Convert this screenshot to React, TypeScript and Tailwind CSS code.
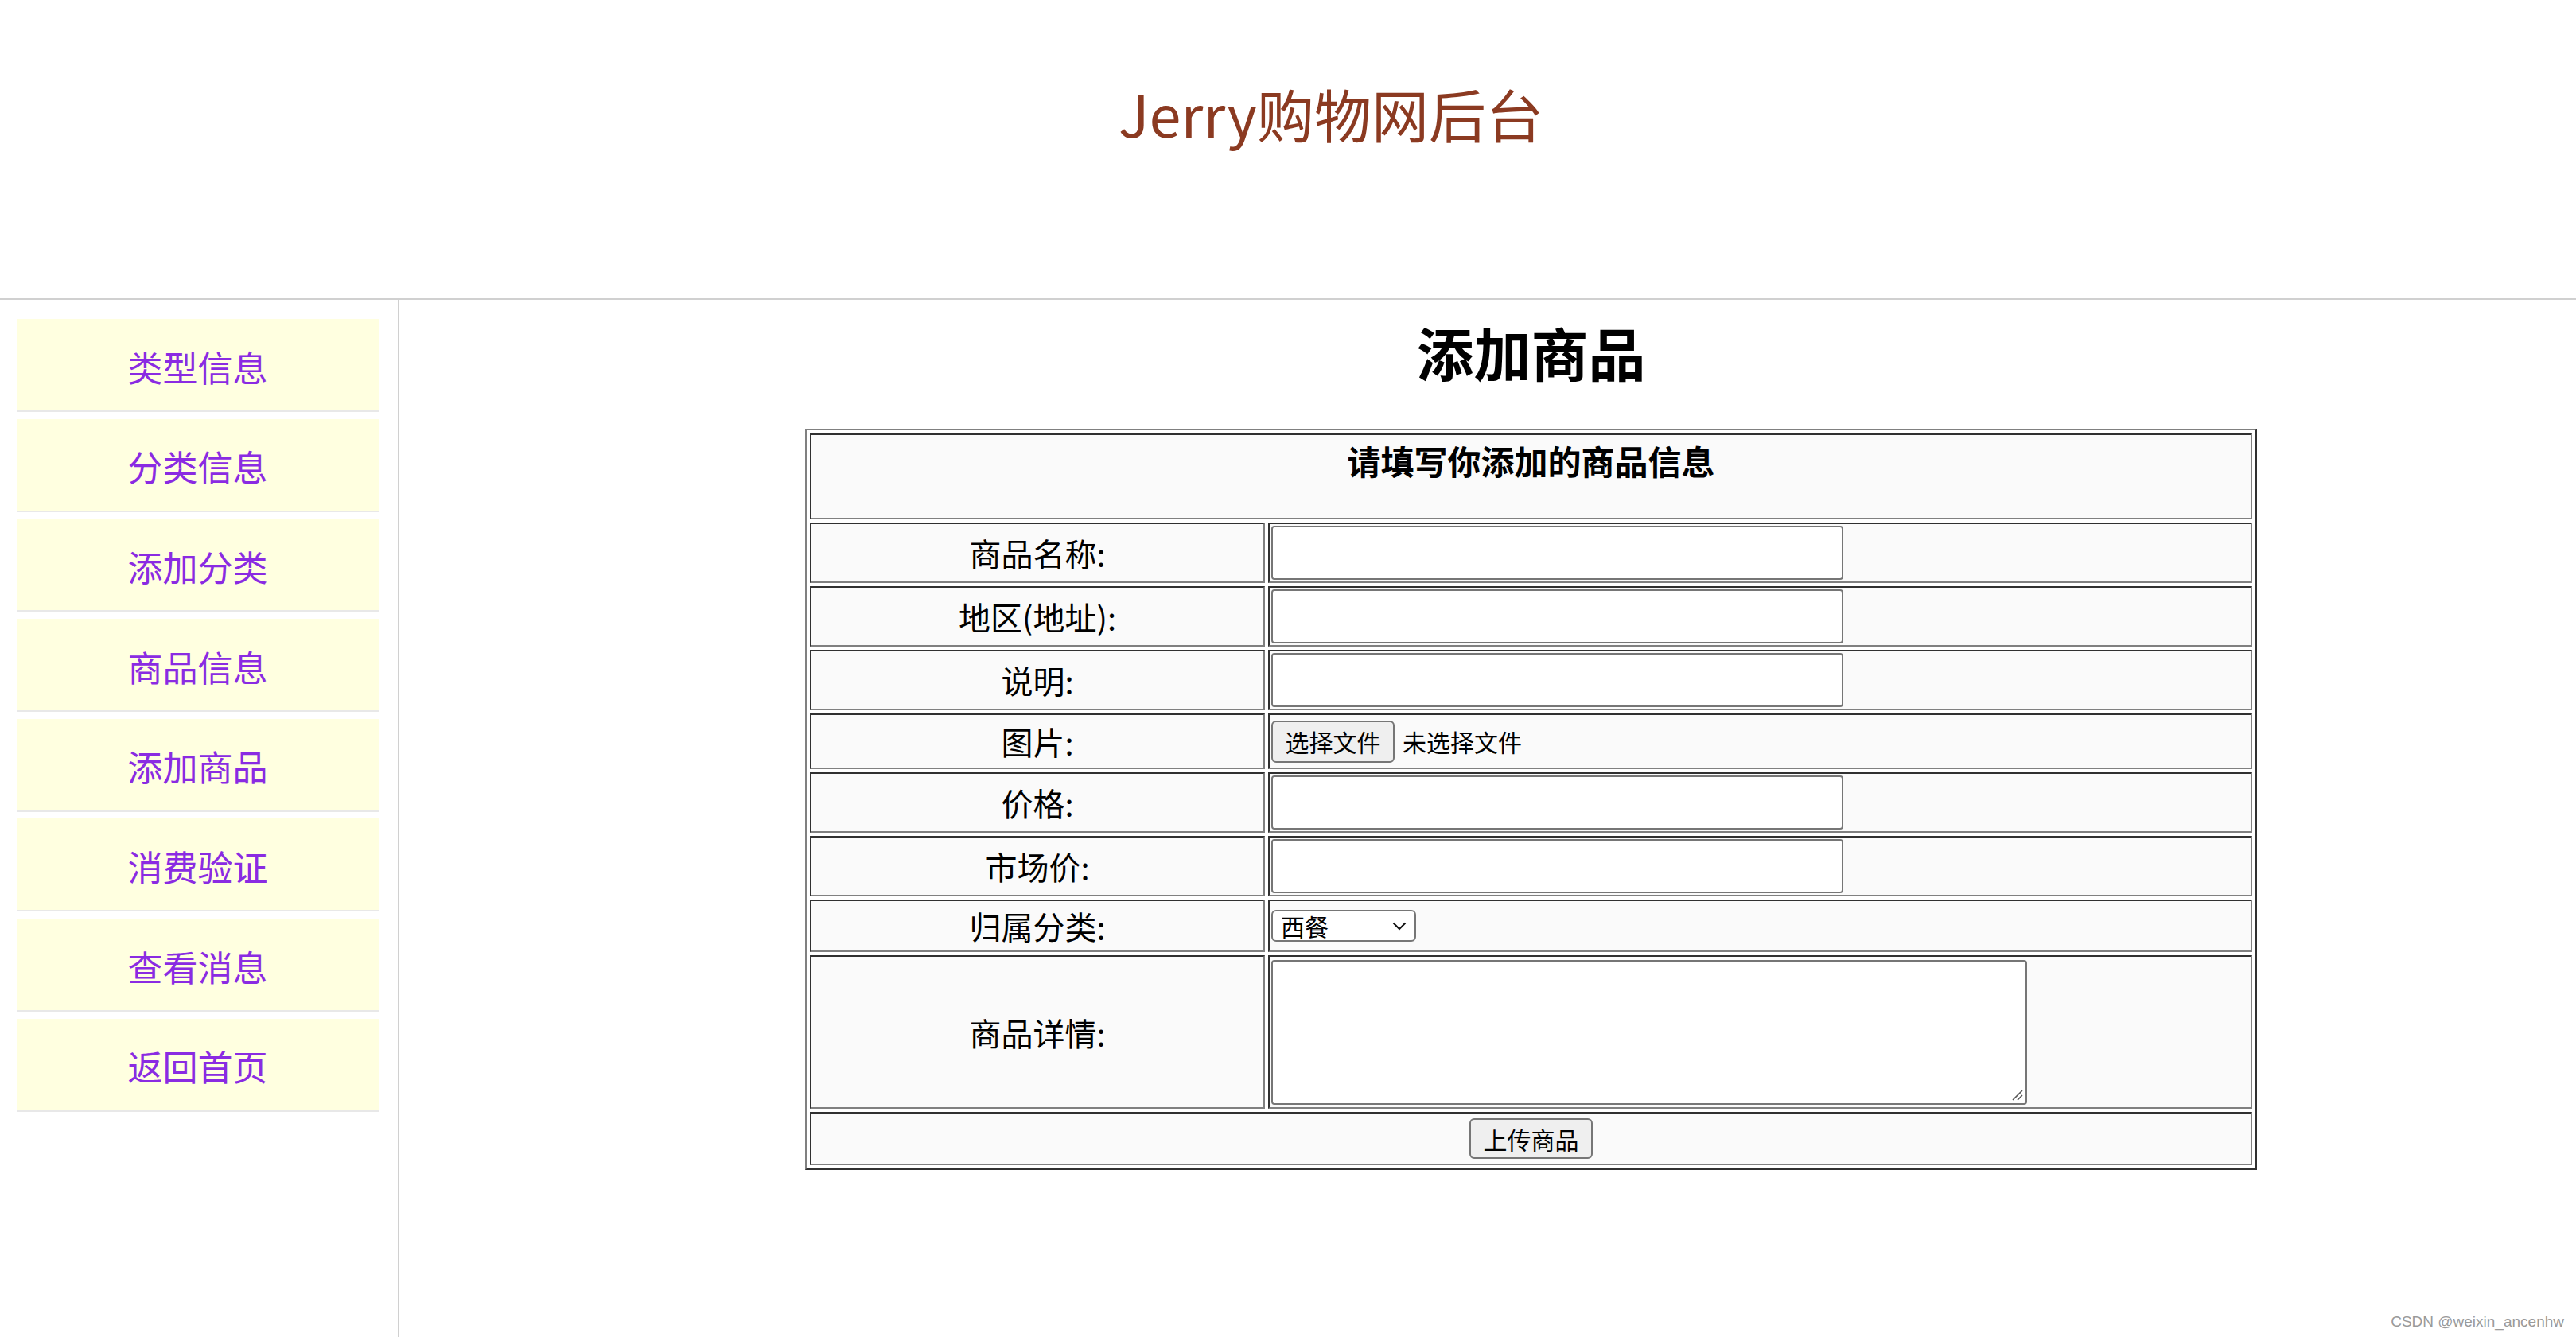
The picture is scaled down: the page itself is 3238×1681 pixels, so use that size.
import React from "react";

// left menu entries
const menu = ["类型信息", "分类信息", "添加分类", "商品信息", "添加商品", "消费验证", "查看消息", "返回首页"];

// inset cell border, like a table with border="1"
const cell = "border-2 border-solid border-[#808080] border-t-[#303030] border-l-[#303030] bg-[#fafafa]";
const label = "flex items-center justify-center text-[40px] leading-[56px] text-black";
const input = "h-[68px] w-[719px] rounded-[4px] border-2 border-solid border-[#767676] bg-white";
const btn = "flex items-center justify-center rounded-[6px] border-2 border-solid border-[#767676] bg-[#efefef] text-[30px] leading-[40px] text-black";

function TextRow({ name }: { name: string }) {
  return (
    <>
      <div className={`${cell} ${label} h-[76px]`}>{name}</div>
      <div className={`${cell} flex h-[76px] items-center px-[2px]`}>
        <input type="text" className={input} />
      </div>
    </>
  );
}

export default function App() {
  return (
    <div className="relative flex h-[1681px] flex-col overflow-hidden bg-white font-['Noto_Sans_CJK_SC','Noto_Sans',sans-serif]">
      <header className="h-[377px] border-b-2 border-solid border-[#d0d0d0] pl-[108px] pt-[106px] text-center">
        <h1 className="text-[72px] font-normal leading-[72px] text-[#8b3a21]">Jerry购物网后台</h1>
      </header>

      <div className="flex flex-1">
        <nav className="flex w-[502px] flex-col gap-[8.7px] border-r-2 border-solid border-[#d0d0d0] pl-[21px] pt-[24px]">
          {menu.map((m) => (
            <a
              key={m}
              href="#"
              className="flex h-[117px] w-[455px] items-center justify-center border-b-2 border-solid border-[#e8e8e8] bg-[#ffffe0] pt-[4px] text-[44px] leading-[56px] text-[#8a2be2]"
            >
              {m}
            </a>
          ))}
        </nav>

        <main className="flex-1 pl-[510px]">
          <h2 className="mt-[29px] w-[1825px] text-center text-[72px] font-bold leading-[72px] text-black">添加商品</h2>

          <form className="mt-[61px] grid w-[1825px] grid-cols-[572px_1237px] gap-[4px] border-2 border-solid border-[#303030] border-t-[#808080] border-l-[#808080] bg-white p-[4px]">
            <div className={`${cell} col-span-2 h-[108px] pt-[7px] text-center text-[42px] font-bold leading-[50px] text-black`}>
              请填写你添加的商品信息
            </div>

            <TextRow name="商品名称:" />
            <TextRow name="地区(地址):" />
            <TextRow name="说明:" />

            <div className={`${cell} ${label} h-[70px]`}>图片:</div>
            <div className={`${cell} flex h-[70px] items-center gap-[10px] px-[2px]`}>
              <button type="button" className={`${btn} h-[53px] w-[155px]`}>选择文件</button>
              <span className="text-[30px] leading-[40px] text-black">未选择文件</span>
            </div>

            <TextRow name="价格:" />
            <TextRow name="市场价:" />

            <div className={`${cell} ${label} h-[66px]`}>归属分类:</div>
            <div className={`${cell} flex h-[66px] items-center px-[2px]`}>
              <div className="flex h-[40px] w-[182px] items-center justify-between rounded-[6px] border-2 border-solid border-[#767676] bg-white pl-[10px] pr-[10px]">
                <span className="text-[30px] leading-[36px] text-black">西餐</span>
                <svg width="18" height="11" viewBox="0 0 18 11" fill="none">
                  <path d="M1.5 1.5 L9 9 L16.5 1.5" stroke="#111" strokeWidth="2" />
                </svg>
              </div>
            </div>

            <div className={`${cell} ${label} h-[193px]`}>商品详情:</div>
            <div className={`${cell} flex h-[193px] items-center px-[2px]`}>
              <div className="relative">
                <textarea className="block h-[182px] w-[950px] resize-none rounded-[4px] border-2 border-solid border-[#767676] bg-white" />
                <svg className="absolute bottom-[5px] right-[5px]" width="16" height="16" viewBox="0 0 16 16" fill="none">
                  <path d="M15 3 L3 15 M15 9 L9 15" stroke="#555" strokeWidth="1.6" />
                </svg>
              </div>
            </div>

            <div className={`${cell} col-span-2 flex h-[67px] items-center justify-center`}>
              <button type="button" className={`${btn} h-[51px] w-[155px]`}>上传商品</button>
            </div>
          </form>
        </main>
      </div>

      <div className="absolute bottom-[5px] right-[15px] font-['Liberation_Sans',sans-serif] text-[19px] text-[#9a9a9a]">
        CSDN @weixin_ancenhw
      </div>
    </div>
  );
}
